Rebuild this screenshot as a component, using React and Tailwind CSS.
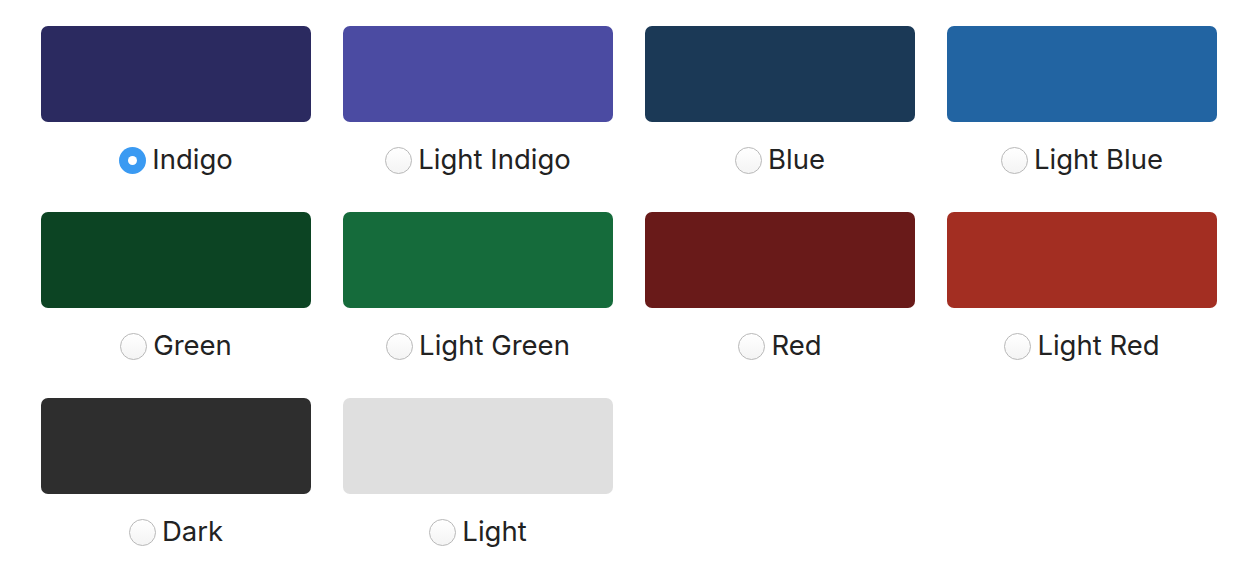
const COLORS = [
  { name: "Indigo", hex: "#2b2a60", checked: true },
  { name: "Light Indigo", hex: "#4b4ba2" },
  { name: "Blue", hex: "#1b3956" },
  { name: "Light Blue", hex: "#2264a2" },
  { name: "Green", hex: "#0c4423" },
  { name: "Light Green", hex: "#156b3b" },
  { name: "Red", hex: "#691a19" },
  { name: "Light Red", hex: "#a32e22" },
  { name: "Dark", hex: "#2e2e2e" },
  { name: "Light", hex: "#dfdfdf" },
];

function Radio({ checked }) {
  if (checked) {
    return (
      <span className="flex h-[27px] w-[27px] shrink-0 items-center justify-center rounded-full bg-[#3a9af2]">
        <span className="h-[9px] w-[9px] rounded-full bg-white" />
      </span>
    );
  }
  return (
    <span className="h-[27px] w-[27px] shrink-0 rounded-full border-[1.5px] border-[#b8b8b8] bg-gradient-to-b from-white to-[#f4f4f4]" />
  );
}

export default function App() {
  return (
    <div
      className="min-h-screen bg-white pl-[41px] pt-[26px]"
      style={{ fontFamily: "Inter, 'Open Sans', sans-serif" }}
    >
      <div className="grid w-[1176px] grid-cols-4 gap-x-[32px] gap-y-[14px]">
        {COLORS.map((c) => (
          <label key={c.name} className="flex flex-col">
            <div
              className="h-[96px] rounded-[7px]"
              style={{ backgroundColor: c.hex }}
            />
            <div className="flex h-[76px] items-center justify-center gap-[6px]">
              <Radio checked={c.checked} />
              <span className="text-[27.5px] leading-none text-[#222]">
                {c.name}
              </span>
            </div>
          </label>
        ))}
      </div>
    </div>
  );
}
